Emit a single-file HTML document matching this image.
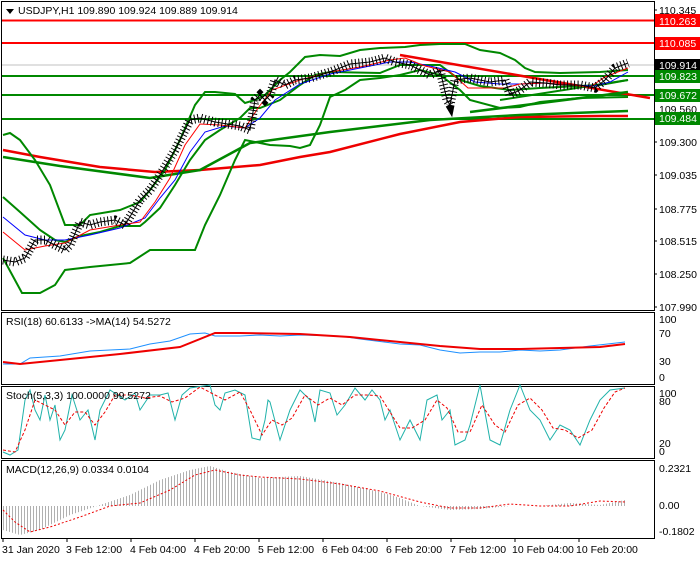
<!DOCTYPE html>
<html><head><meta charset="utf-8"><style>
body{margin:0;background:#fff;width:700px;height:560px;overflow:hidden;font-family:"Liberation Sans",sans-serif}
svg text{font-family:"Liberation Sans",sans-serif;font-size:10.5px}
</style></head><body>
<svg width="700" height="560" viewBox="0 0 700 560" xmlns="http://www.w3.org/2000/svg">
<defs>
<pattern id="vl" x="0" y="0" width="3" height="10" patternUnits="userSpaceOnUse"><rect x="0" y="0" width="1" height="10" fill="#b0b0b0"/></pattern>
</defs>
<rect width="700" height="560" fill="#fff"/>
<g fill="none" stroke="#000" stroke-width="1">
<rect x="1.5" y="1.5" width="653" height="309"/>
<rect x="1.5" y="312.5" width="653" height="72"/>
<rect x="1.5" y="386.5" width="653" height="72"/>
<rect x="1.5" y="460.5" width="653" height="78"/>
</g>
<line x1="2" y1="65" x2="654" y2="65" stroke="#c0c0c0"/>
<line x1="2" y1="20.5" x2="654" y2="20.5" stroke="#f00" stroke-width="2"/>
<line x1="2" y1="43" x2="654" y2="43" stroke="#f00" stroke-width="2"/>
<line x1="2" y1="76" x2="654" y2="76" stroke="#080" stroke-width="2"/>
<line x1="2" y1="95" x2="654" y2="95" stroke="#080" stroke-width="2"/>
<line x1="2" y1="119" x2="654" y2="119" stroke="#080" stroke-width="2"/>
<g fill="none">
<polyline points="3,150 40,157 100,167 155,172 200,170 260,165 300,157 330,152 400,134 460,122 520,117 600,116 628,116" stroke="#e00" stroke-width="2.5"/>
<polyline points="3,157 60,166 150,178 200,170 250,143 330,132 430,120 520,115 600,112 628,111" stroke="#080" stroke-width="2.5"/>
<line x1="400" y1="55" x2="650" y2="98" stroke="#e00" stroke-width="2.5"/>
<line x1="470" y1="112" x2="628" y2="92" stroke="#080" stroke-width="2.5"/>
<line x1="500" y1="100" x2="628" y2="80" stroke="#080" stroke-width="2"/>
<!-- bollinger upper -->
<polyline points="3,135 10,133 20,140 35,160 50,185 65,225 80,225 90,215 120,210 140,202 150,190 165,170 180,140 195,105 205,92 215,92 235,94 245,103 255,100 265,95 280,80 290,72 305,57 320,55 340,56 360,50 380,48 405,47 420,45 440,44 465,44 480,50 500,53 515,60 525,68 535,72 560,73 600,72 628,70" stroke="#080" stroke-width="2"/>
<!-- lower -->
<polyline points="3,258 22,293 40,293 55,285 65,270 90,267 130,263 150,250 165,250 195,250 205,225 220,195 235,160 245,140 255,142 270,145 290,146 300,148 310,145 320,125 330,97 345,90 360,80 380,78 400,75 420,70 440,75 460,90 470,100 500,108 520,107 540,102 560,100 580,98 628,97" stroke="#080" stroke-width="2"/>
<!-- middle -->
<polyline points="3,197 20,212 40,230 55,240 65,242 80,236 100,232 120,226 140,226 145,222 160,208 175,185 190,160 205,140 220,130 240,118 250,108 260,108 280,100 300,85 315,75 330,72 380,73 400,65 440,65 460,80 480,86 510,90 540,88 600,85 628,80" stroke="#080" stroke-width="2"/>
<!-- blue/red MAs -->
<polyline points="3,217 25,235 45,240 65,240 90,235 120,228 145,218 160,198 175,180 190,152 205,132 225,126 245,128 260,118 275,100 300,84 330,74 360,68 390,62 410,62 430,66 455,72 475,82 500,84 520,84 545,83 570,85 595,86 610,82 628,72" stroke="#00f" stroke-width="1"/>
<polyline points="3,232 25,250 45,246 65,243 90,230 120,225 140,222 155,202 170,178 185,145 200,124 220,125 245,128 258,108 272,90 300,80 330,72 360,67 390,60 405,58 425,66 450,72 468,88 485,88 505,88 520,84 545,83 570,85 590,87 605,77 628,68" stroke="#f00" stroke-width="1"/>
<!-- candles -->
<polyline points="3,260 15,262 25,258 35,240 45,240 55,245 65,250 70,245 80,222 90,225 100,222 115,220 125,225 140,200 150,190 160,175 175,150 190,120 200,118 215,122 240,126 250,130 255,100 260,95 265,100 270,95 275,80 285,85 295,80 310,78 330,72 350,64 370,62 385,58 395,62 410,65 420,70 430,75 440,70 447,100 450,105 455,80 470,78 490,82 505,80 510,95 520,90 530,82 545,83 560,85 580,85 595,88 605,80 615,68 628,63" stroke="#000" stroke-width="9" stroke-dasharray="1,2.5"/>
<polyline points="3,260 15,262 25,258 35,240 45,240 55,245 65,250 70,245 80,222 90,225 100,222 115,220 125,225 140,200 150,190 160,175 175,150 190,120 200,118 215,122 240,126 250,130 255,100 260,95 265,100 270,95 275,80 285,85 295,80 310,78 330,72 350,64 370,62 385,58 395,62 410,65 420,70 430,75 440,70 447,100 450,105 455,80 470,78 490,82 505,80 510,95 520,90 530,82 545,83 560,85 580,85 595,88 605,80 615,68 628,63" stroke="#000" stroke-width="1"/>
<!-- RSI -->
<polyline points="3,364 20,364 30,358 60,356 90,351 110,350 130,349 150,344 170,341 190,334 205,333 215,336 240,336 260,335 280,336 300,335 340,336 360,339 400,344 420,345 440,350 460,353 480,352 500,352 520,350 540,351 560,350 590,346 625,342" stroke="#1e90ff" stroke-width="1"/>
<polyline points="3,362 20,364 60,360 120,354 180,347 215,333 240,333 300,334 350,337 400,342 440,346 480,349 520,349 560,348 600,347 625,344" stroke="#e00" stroke-width="2"/>
<!-- Stoch -->
<polyline points="3,452 10,455 18,450 25,400 30,390 35,410 40,420 45,395 50,420 55,405 60,440 65,430 72,395 80,420 88,410 95,440 100,410 110,390 125,400 135,393 140,410 150,395 160,395 168,393 175,420 182,395 190,388 210,385 215,405 220,410 225,393 235,390 245,395 252,438 260,440 265,420 268,400 270,402 280,440 290,410 300,390 310,400 315,422 320,390 330,393 337,415 345,405 355,388 365,400 372,390 380,400 385,420 390,410 400,440 410,420 420,440 427,400 437,395 442,420 450,410 455,445 465,440 470,425 480,385 490,440 500,445 510,410 520,385 530,410 540,420 550,440 560,425 570,430 580,445 590,420 600,400 610,390 625,388" stroke="#20b2aa" stroke-width="1"/>
<polyline points="3,450 15,452 25,430 35,400 45,405 55,410 65,425 75,412 85,412 95,425 105,412 115,395 130,395 145,398 160,396 172,402 185,398 200,387 215,395 225,400 240,392 250,410 262,435 272,420 282,425 292,418 305,395 318,405 330,398 342,405 355,395 368,395 380,396 390,412 400,428 412,428 425,420 437,400 447,408 458,432 470,432 482,405 495,425 505,432 518,405 530,398 542,410 553,428 565,430 578,438 592,430 604,408 615,392 625,388" stroke="#e00" stroke-width="1" stroke-dasharray="3,2"/>
<!-- MACD -->
<polygon points="3,506 3,530 20,535 40,530 70,515 100,505 130,495 160,480 190,470 210,466 230,472 260,478 300,476 340,483 380,492 400,498 420,506 450,510 480,509 510,506 540,506 570,503 600,505 625,500 625,506" fill="url(#vl)"/>
<polyline points="3,510 15,522 30,532 50,527 80,517 110,506 140,503 170,490 195,475 215,470 240,475 260,477 300,479 340,484 380,491 420,502 450,508 480,508 510,504 540,506 570,506 600,501 625,502" stroke="#e00" stroke-width="1" stroke-dasharray="2,2"/>
</g>
<path d="M6 9 L14 9 L10 14 Z" fill="#000"/>
<text x="18" y="14">USDJPY,H1  109.890 109.924 109.889 109.914</text>
<text x="6" y="325">RSI(18) 60.6133  -&gt;MA(14) 54.5272</text>
<text x="6" y="399">Stoch(5,3,3) 100.0000 99.5272</text>
<text x="6" y="473">MACD(12,26,9) 0.0334 0.0104</text>
<g>
<text x="659" y="14">110.345</text>
<rect x="655" y="14" width="45" height="13" fill="#f00"/><text x="659" y="25" fill="#fff">110.263</text>
<rect x="655" y="37" width="45" height="13" fill="#f00"/><text x="659" y="47" fill="#fff">110.085</text>
<rect x="655" y="59" width="45" height="13" fill="#000"/><text x="659" y="69" fill="#fff">109.914</text>
<rect x="655" y="70" width="45" height="13" fill="#080"/><text x="659" y="80" fill="#fff">109.823</text>
<rect x="655" y="89" width="45" height="13" fill="#080"/><text x="659" y="99" fill="#fff">109.672</text>
<text x="659" y="113">109.560</text>
<rect x="655" y="112" width="45" height="13" fill="#080"/><text x="659" y="122" fill="#fff">109.484</text>
<text x="659" y="146">109.300</text>
<text x="659" y="179">109.035</text>
<text x="659" y="213">108.775</text>
<text x="659" y="245">108.515</text>
<text x="659" y="278">108.250</text>
<text x="659" y="311">107.990</text>
<text x="659" y="323">100</text><text x="659" y="337">70</text><text x="659" y="365">30</text><text x="659" y="381">0</text>
<text x="659" y="397">100</text><text x="659" y="405">80</text><text x="659" y="447">20</text><text x="659" y="455">0</text>
<text x="659" y="472">0.2321</text><text x="659" y="509">0.00</text><text x="659" y="535">-0.1802</text>
</g>
<g stroke="#000"><line x1="654" y1="10" x2="657" y2="10"/><line x1="654" y1="142" x2="657" y2="142"/><line x1="654" y1="175" x2="657" y2="175"/><line x1="654" y1="209" x2="657" y2="209"/><line x1="654" y1="241" x2="657" y2="241"/><line x1="654" y1="274" x2="657" y2="274"/><line x1="654" y1="307" x2="657" y2="307"/></g>
<g>
<text x="2" y="553">31 Jan 2020</text><text x="66" y="553">3 Feb 12:00</text><text x="130" y="553">4 Feb 04:00</text><text x="194" y="553">4 Feb 20:00</text><text x="258" y="553">5 Feb 12:00</text><text x="322" y="553">6 Feb 04:00</text><text x="386" y="553">6 Feb 20:00</text><text x="450" y="553">7 Feb 12:00</text><text x="512" y="553">10 Feb 04:00</text><text x="576" y="553">10 Feb 20:00</text>
</g>
<g stroke="#000"><line x1="3" y1="538" x2="3" y2="542"/><line x1="67" y1="538" x2="67" y2="542"/><line x1="131" y1="538" x2="131" y2="542"/><line x1="195" y1="538" x2="195" y2="542"/><line x1="259" y1="538" x2="259" y2="542"/><line x1="323" y1="538" x2="323" y2="542"/><line x1="387" y1="538" x2="387" y2="542"/><line x1="451" y1="538" x2="451" y2="542"/><line x1="515" y1="538" x2="515" y2="542"/><line x1="579" y1="538" x2="579" y2="542"/></g>
</svg>
</body></html>
